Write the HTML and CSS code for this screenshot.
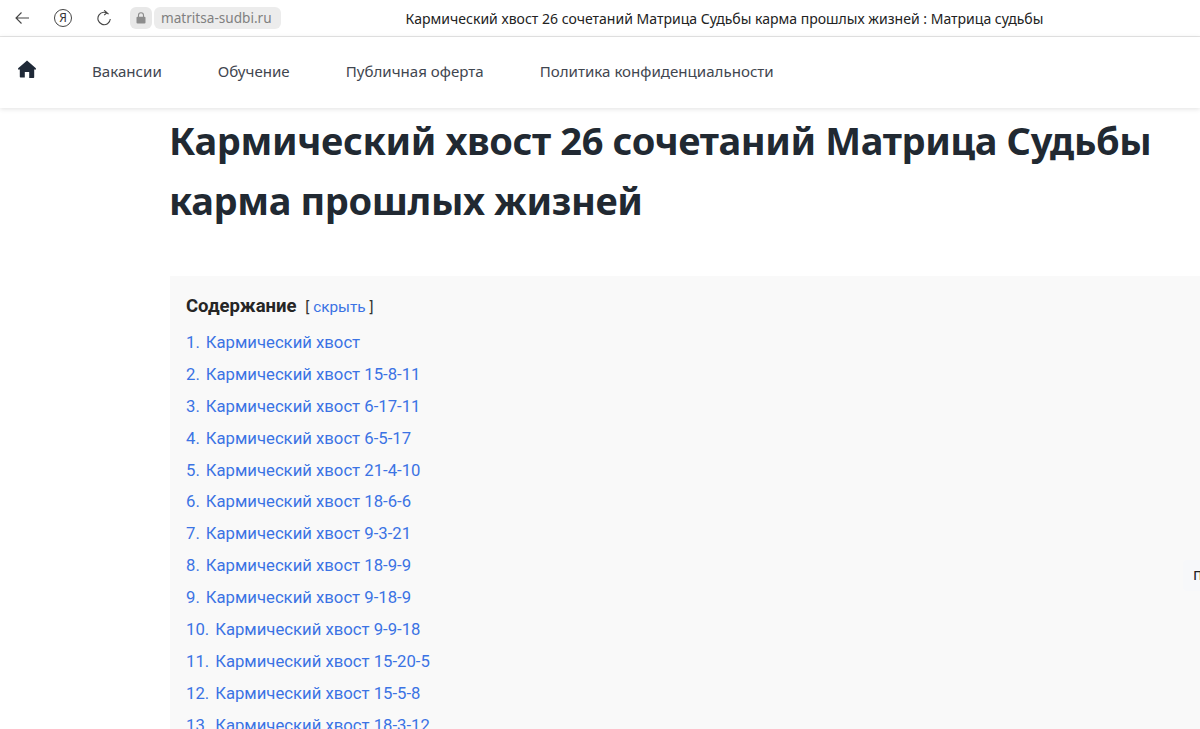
FILE: index.html
```html
<!DOCTYPE html>
<html lang="ru">
<head>
  <meta charset="UTF-8">
  <title>Кармический хвост 26 сочетаний Матрица Судьбы карма прошлых жизней</title>
  <link rel="stylesheet" href="styles.css">
</head>
<body>
  <div class="browser-bar">
    <svg class="bar-icon back-icon" viewBox="0 0 16 14" width="16" height="14"><path d="M15 7H2M7.500 1.500 2 7l5.500 5.500" fill="none" stroke="#444" stroke-width="1.100"/></svg>
    <div class="ya-icon">Я</div>
    <svg class="bar-icon reload-icon" viewBox="0 0 16 16" width="16" height="16"><path d="M12.600 4.200A6.200 6.200 0 1 0 14.300 9M8.200 0.300 11 2.700 8.200 5.200" fill="none" stroke="#444" stroke-width="1.100"/></svg>
    <div class="lock-box">
      <svg viewBox="0 0 10 12" width="10" height="12"><path d="M2.500 5V3.300a2.500 2.500 0 0 1 5 0V5" fill="none" stroke="#8c8c8c" stroke-width="1.100"/><rect x="0.500" y="4.800" width="9" height="6.800" rx="1" fill="#8c8c8c"/></svg>
    </div>
    <div class="domain">matritsa-sudbi.ru</div>
    <div class="page-title">Кармический хвост 26 сочетаний Матрица Судьбы карма прошлых жизней : Матрица судьбы</div>
  </div>

  <nav class="site-nav">
    <a class="home-link" href="#"><svg viewBox="0 0 18 18" width="18" height="18"><path d="M9 .5 6.800 2.400.7 7.700c-.5.400-.7.800-.7 1.300v.5h1.800v7.300c0 .4.300.700.700.700h4.300v-5.500h4.400V18h4.300c.4 0 .7-.3.700-.7V9.500H18V9c0-.5-.2-.9-.7-1.300z" fill="#1f2937"/></svg></a>
    <a href="#">Вакансии</a>
    <a href="#">Обучение</a>
    <a href="#">Публичная оферта</a>
    <a href="#">Политика конфиденциальности</a>
  </nav>

  <main class="content">
    <h1>Кармический хвост 26 сочетаний Матрица Судьбы карма прошлых жизней</h1>
    <div class="toc">
      <div class="toc-head"><b>Содержание</b> <span class="toc-toggle">[ <a href="#">скрыть</a> ]</span></div>
      <ul class="toc-list">
        <li><a href="#"><span>1.</span>Кармический хвост</a></li>
        <li><a href="#"><span>2.</span>Кармический хвост 15-8-11</a></li>
        <li><a href="#"><span>3.</span>Кармический хвост 6-17-11</a></li>
        <li><a href="#"><span>4.</span>Кармический хвост 6-5-17</a></li>
        <li><a href="#"><span>5.</span>Кармический хвост 21-4-10</a></li>
        <li><a href="#"><span>6.</span>Кармический хвост 18-6-6</a></li>
        <li><a href="#"><span>7.</span>Кармический хвост 9-3-21</a></li>
        <li><a href="#"><span>8.</span>Кармический хвост 18-9-9</a></li>
        <li><a href="#"><span>9.</span>Кармический хвост 9-18-9</a></li>
        <li><a href="#"><span>10.</span>Кармический хвост 9-9-18</a></li>
        <li><a href="#"><span>11.</span>Кармический хвост 15-20-5</a></li>
        <li><a href="#"><span>12.</span>Кармический хвост 15-5-8</a></li>
        <li><a href="#"><span>13.</span>Кармический хвост 18-3-12</a></li>
      </ul>
    </div>
  </main>

  <div class="side-tab">п</div>
</body>
</html>
```

FILE: styles.css
```css
* {
  margin: 0;
  padding: 0;
  box-sizing: border-box;
}
html, body {
  height: 729px;
  overflow: hidden;
}
body {
  background: #fff;
  font-family: "Noto Sans", sans-serif;
  color: #212932;
}
a {
  text-decoration: none;
}
.browser-bar {
  height: 37px;
  display: flex;
  align-items: center;
  border-bottom: 1px solid #e6e6e6;
}
.back-icon {
  margin-left: 14px;
}
.ya-icon {
  width: 18px;
  height: 18px;
  margin-left: 24px;
  border: 1.4px solid #444;
  border-radius: 50%;
  font-size: 12px;
  line-height: 15px;
  text-align: center;
  color: #333;
}
.reload-icon {
  margin-left: 24px;
}
.lock-box {
  width: 22px;
  height: 22px;
  margin-left: 18px;
  background: #e8e8e8;
  border-radius: 6px;
  display: flex;
  align-items: center;
  justify-content: center;
}
.domain {
  margin-left: 2px;
  height: 22px;
  padding: 0 9px 0 7px;
  background: #ececec;
  border-radius: 6px;
  font-size: 13.600px;
  line-height: 21px;
  color: #808080;
}
.page-title {
  margin-left: 125px;
  font-size: 14.040px;
  color: #222;
  white-space: nowrap;
}
.site-nav {
  height: 71px;
  display: flex;
  align-items: center;
  background: #fff;
  box-shadow: 0 1px 5px rgba(0, 0, 0, 0.12);
  padding-left: 18px;
  gap: 56px;
  position: relative;
}
.site-nav a {
  font-size: 15.100px;
  color: #3f4650;
  position: relative;
  top: -2px;
}
.site-nav .home-link {
  display: flex;
  margin: -4px 0 0 0;
}
.content {
  padding-left: 170px;
}
h1 {
  font-size: 38px;
  font-weight: 700;
  line-height: 60px;
  margin: 2px 0 0 -1px;
  letter-spacing: -0.38px;
  color: #212932;
}
.toc {
  margin-top: 46px;
  width: 1030px;
  height: 460px;
  background: #f9f9f9;
  padding: 18px 16px;
  font-family: Roboto, sans-serif;
}
.toc-head {
  font-size: 15.300px;
  color: #333;
  line-height: 24px;
}
.toc-head b {
  font-size: 18.500px;
  font-weight: 700;
  color: #262626;
  margin-right: 5px;
}
.toc-toggle a, .toc-list a {
  color: #3b73e4;
}
.toc-list {
  list-style: none;
  margin-top: 8px;
}
.toc-list li {
  height: 31.900px;
  font-size: 16.700px;
  line-height: 32px;
}
.toc-list span {
  margin-right: 6px;
}
.side-tab {
  position: absolute;
  left: 1183px;
  top: 560px;
  width: 17px;
  height: 31px;
  background: #f7f8fa;
  border-radius: 4px 0 0 4px;
  padding-left: 10px;
  font: 16px/29px "Noto Sans", sans-serif;
  color: #222;
}
```
